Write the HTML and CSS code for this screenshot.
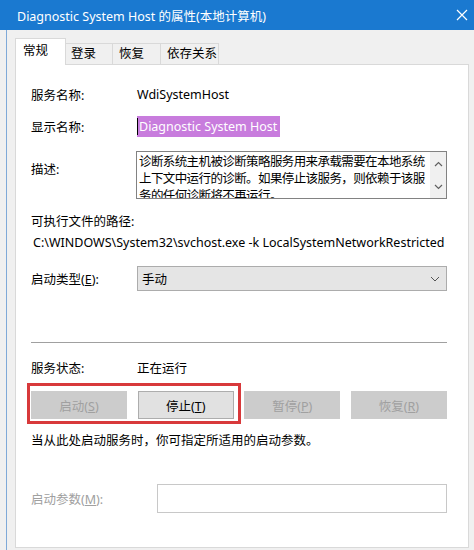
FILE: index.html
```html
<!DOCTYPE html>
<html>
	<head>
		<meta charset="utf-8" />
		<title>Diagnostic System Host 的属性(本地计算机)</title>
		<link rel="stylesheet" href="styles.css">
	</head>
	<body>
		<div class="window">
			<div class="titlebar">
				<span class="title">Diagnostic System Host 的属性(本地计算机)</span>
				<svg class="close" width="12" height="12" viewBox="0 0 12 12">
					<path d="M1 1L11 11M11 1L1 11" stroke="#fff" stroke-width="1.2" fill="none" />
				</svg>
			</div>
			<div class="frame">
				<div class="tabs">
					<div class="tab active">常规</div>
					<div class="tab t-logon">登录</div>
					<div class="tab t-recover">恢复</div>
					<div class="tab t-deps">依存关系</div>
				</div>
				<div class="panel">
					<div class="row r-name">
						<span class="label">服务名称:</span>
						<span>WdiSystemHost</span>
					</div>
					<div class="row r-display">
						<span class="label">显示名称:</span>
						<span class="selected"><span class="caret"></span>Diagnostic System Host</span>
					</div>
					<div class="row r-desc">
						<span class="label">描述:</span>
						<div class="textarea">
							<div class="textarea-text">诊断系统主机被诊断策略服务用来承载需要在本地系统上下文中运行的诊断。如果停止该服务，则依赖于该服务的任何诊断将不再运行。</div>
							<div class="scroll">
								<svg width="9" height="6" viewBox="0 0 9 6"><path d="M1 5L4.5 1.5L8 5" stroke="#606060" stroke-width="1.2" fill="none" /></svg>
								<svg width="9" height="6" viewBox="0 0 9 6"><path d="M1 1L4.5 4.5L8 1" stroke="#606060" stroke-width="1.2" fill="none" /></svg>
							</div>
						</div>
					</div>
					<div class="r-pathlabel">可执行文件的路径:</div>
					<div class="r-path">C:\WINDOWS\System32\svchost.exe -k LocalSystemNetworkRestricted -p</div>
					<div class="row r-type">
						<span class="label">启动类型(<u>E</u>):</span>
						<div class="select">
							<span>手动</span>
							<svg width="10" height="6" viewBox="0 0 10 6"><path d="M1 1L5 5L9 1" stroke="#555" stroke-width="1" fill="none" /></svg>
						</div>
					</div>
					<hr class="sep" />
					<div class="row r-status">
						<span class="label">服务状态:</span>
						<span>正在运行</span>
					</div>
					<div class="buttons">
						<button class="btn" disabled>启动(<u>S</u>)</button>
						<button class="btn on">停止(<u>T</u>)</button>
						<button class="btn" disabled>暂停(<u>P</u>)</button>
						<button class="btn" disabled>恢复(<u>R</u>)</button>
						<div class="highlight"></div>
					</div>
					<div class="r-hint">当从此处启动服务时，你可指定所适用的启动参数。</div>
					<div class="row r-params">
						<span class="label params-label">启动参数(<u>M</u>):</span>
						<div class="input"></div>
					</div>
				</div>
			</div>
		</div>
	</body>
</html>
```

FILE: styles.css
```css
body {
	margin: 0;
	background: #f0f0f0;
	font-family: "Noto Sans", "Noto Sans CJK SC", sans-serif;
	font-size: 12.5px;
	color: #000;
	width: 474px;
	height: 550px;
	overflow: hidden;
}

.titlebar {
	height: 30px;
	background: #1a79d0;
	color: #fff;
	display: flex;
	align-items: center;
	justify-content: space-between;
	padding: 0 6px 0 17px;
}

.title {
	font-size: 12.5px;
}

.frame {
	margin-left: 6px;
	border-left: 1px solid #7fa9d8;
	padding: 8px 5px 0 8px;
	height: 512px;
}

.tabs {
	display: flex;
	align-items: flex-end;
	height: 26px;
}

.tab {
	height: 21px;
	line-height: 20px;
	padding-left: 5px;
	border: 1px solid #d9d9d9;
	border-bottom: none;
	border-left: none;
	background: #f0f0f0;
	box-sizing: border-box;
}

.tab.active {
	width: 51px;
	height: 27px;
	line-height: 24px;
	background: #fff;
	border-left: 1px solid #d9d9d9;
	padding-left: 7px;
	margin-bottom: -1px;
}

.t-logon {
	width: 47px;
}

.t-recover {
	width: 48px;
	padding-left: 6px;
}

.t-deps {
	width: 58px;
	padding-left: 6px;
}

.panel {
	background: #fff;
	border: 1px solid #d9d9d9;
	height: 482px;
	padding: 0 21px 0 15px;
}

.row {
	display: flex;
	align-items: center;
}

.label {
	width: 106px;
	flex: none;
}

.r-name {
	height: 20px;
	margin-top: 19px;
}

.r-display {
	height: 22px;
	margin-top: 11px;
}

.selected {
	background: #c87cdd;
	color: #fff;
	height: 21px;
	line-height: 21px;
	padding-right: 3px;
	display: flex;
	align-items: center;
}

.caret {
	width: 1px;
	height: 17px;
	background: #000;
	margin-right: 1px;
}

.r-desc {
	margin-top: 14px;
	align-items: flex-start;
}

.r-desc .label {
	width: 105px;
	margin-top: 8px;
}

.textarea {
	flex: 1;
	height: 46px;
	border: 1px solid #828282;
	display: flex;
	overflow: hidden;
}

.textarea-text {
	flex: 1;
	min-width: 0;
	padding: 1px 0 0 2px;
	line-height: 17px;
	letter-spacing: -0.6px;
}

.scroll {
	width: 16px;
	flex: none;
	background: #f0f0f0;
	display: flex;
	flex-direction: column;
	justify-content: space-between;
	align-items: center;
	padding: 9px 0 8px;
}

.r-pathlabel {
	margin-top: 14px;
	height: 18px;
	line-height: 18px;
}

.r-path {
	height: 18px;
	line-height: 18px;
	margin-top: 3px;
	margin-left: 2px;
	white-space: nowrap;
	overflow: hidden;
}

.r-type {
	margin-top: 14px;
}

.select {
	flex: 1;
	height: 23px;
	background: #e5e5e5;
	border: 1px solid #acacac;
	display: flex;
	align-items: center;
	justify-content: space-between;
	padding: 0 6px 0 4px;
}

.sep {
	border: none;
	border-top: 1px solid #a0a0a0;
	margin: 51px 0 0 0;
	height: 0;
}

.r-status {
	height: 18px;
	margin-top: 15px;
}

.buttons {
	position: relative;
	display: flex;
	justify-content: space-between;
	margin-top: 15px;
}

.btn {
	width: 96px;
	height: 28px;
	font: inherit;
	background: #cccccc;
	color: #a0a0a0;
	border: 1px solid #cccccc;
	padding: 0;
}

.btn.on {
	background: #e1e1e1;
	color: #000;
	border-color: #adadad;
}

.highlight {
	position: absolute;
	left: -4px;
	top: -8px;
	width: 208px;
	height: 35px;
	border: 3px solid #d8393b;
}

.r-hint {
	margin-top: 13px;
	height: 18px;
	line-height: 18px;
}

.r-params {
	margin-top: 34px;
}

.params-label {
	width: 126px;
	color: #a0a0a0;
}

.input {
	flex: 1;
	height: 27px;
	border: 1px solid #c8c8c8;
}
```
